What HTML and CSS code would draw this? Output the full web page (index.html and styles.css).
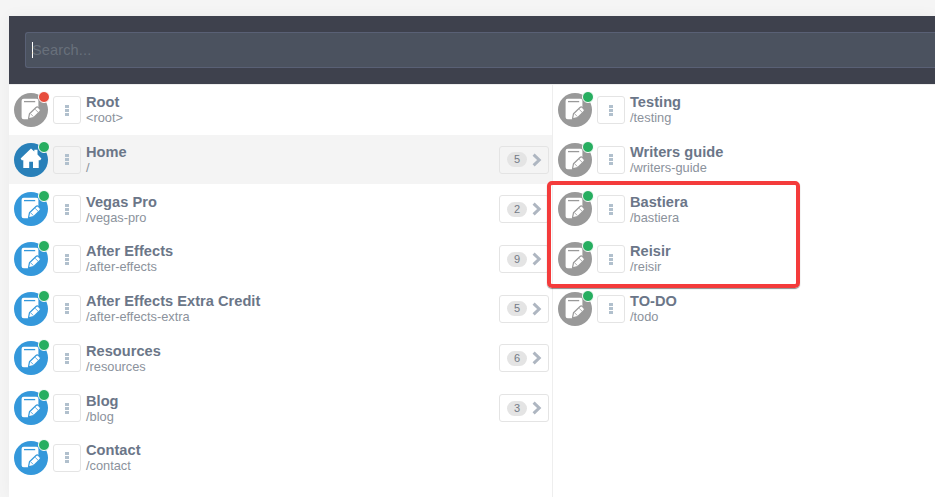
FILE: index.html
```
<!DOCTYPE html>
<html lang="en">
<head>
<meta charset="utf-8">
<title>Pages</title>
<link rel="stylesheet" href="styles.css">
</head>
<body>
<svg class="defs" aria-hidden="true">
  <symbol id="doc" viewBox="0 0 34 34">
    <path class="paper" d="M9.7 5.7H22.4Q24.4 5.7 24.4 7.7V16L15.6 22.5L14.2 26.2H9.7Q7.6 26.2 7.6 24.2V7.7Q7.6 5.7 9.7 5.7Z"/>
    <path class="line" d="M10 8.6H21.2"/>
    <path class="pencil" d="M14.5 25.8L15.5 20.7L22 14.5Q23.2 13.4 24.5 14.6L25.9 16Q27.1 17.3 25.9 18.5L19.6 24.7Z"/>
    <path class="detail" d="M16.7 20.9L19.4 23.6M21.2 16.4L24 19.2"/>
  </symbol>
  <symbol id="house" viewBox="0 0 34 34">
    <path class="paper" d="M17 5.4L20.3 8.6V6.8H23.5V11.6L27.4 15.4L26.2 17.2H24.7V24.9H19V18.7H15.2V24.9H9.3V17.2H7.8L6.6 15.4Z"/>
  </symbol>
  <symbol id="chevron" viewBox="0 0 10 14"><path d="M1.6 1.6L7.2 7L1.6 12.4"/></symbol>
</svg>
<main class="tree">
  <header class="bar"><div class="search"><span class="caret"></span>Search...</div></header>
  <div class="columns">
    <section class="column first" id="col1"></section>
    <section class="column" id="col2"></section>
    <div class="highlight"></div>
  </div>
</main>
<script src="script.js"></script>
</body>
</html>
```
FILE: styles.css
```
* { box-sizing: border-box; }
body { margin: 0; background: #f5f5f5; font-family: "Liberation Sans", Arial, sans-serif; overflow: hidden; }
.defs { display: none; }
.tree { margin: 16px 0 0 9px; height: 481px; background: #fff; box-shadow: 0 0 14px rgba(0,0,0,.045); }
.bar { height: 68px; padding: 16px 0 0 16px; background: #3e414d; }
.search { height: 36px; display: flex; align-items: center; padding-left: 6px; border: 1px solid #596075; border-right: 0; border-radius: 3px 0 0 3px; background: #4b525f; color: #68707b; font-size: 14.6px; letter-spacing: .1px; }
.caret { width: 1px; height: 16px; margin-right: -1px; background: #fff; }
.columns { position: relative; display: flex; height: 413px; border-top: 1px solid #eee; }
.column { flex: 1; padding-top: .2px; }
.first { flex: 0 0 544px; border-right: 1px solid #eee; }
.row { display: flex; align-items: center; height: 49.7px; padding: 0 3px 0 5px; }
.row.selected { height: 49px; margin-bottom: .7px; padding-top: .7px; background: #f4f4f4; }
.icon { position: relative; width: 34px; height: 34px; border-radius: 50%; background: #3498db; --disc: #3498db; }
.icon.gray { background: #999; --disc: #999; }
.icon.home { background: #2980b9; --disc: #2980b9; }
.icon svg { display: block; width: 34px; height: 34px; }
.paper { fill: #fff; }
.line { fill: none; stroke: var(--disc); stroke-width: 1.3; }
.pencil { fill: #fff; stroke: var(--disc); stroke-width: 1.2; stroke-linejoin: round; }
.detail { fill: none; stroke: var(--disc); stroke-width: .8; }
.status { position: absolute; right: -2px; top: -2px; width: 12px; height: 12px; border: 1px solid #fff; border-radius: 50%; background: #27ae60; }
.status.off { background: #e74c3c; }
.menu, .children { height: 28px; border: 1px solid #e4e4e4; border-radius: 3px; display: flex; align-items: center; }
.menu { width: 28px; margin-left: 5px; flex-direction: column; justify-content: center; gap: 1px; }
.menu i { width: 4px; height: 3px; background: #b1c0cd; }
.label { margin-left: 5px; padding-top: .8px; flex: 1; white-space: nowrap; }
.title { height: 16px; line-height: 16px; font-size: 14.6px; font-weight: bold; letter-spacing: .03px; color: #6b7688; }
.path { height: 16px; line-height: 16px; font-size: 12.8px; color: #8b929c; }
.children { width: 50px; padding-left: 7px; }
.count { width: 20px; height: 15px; border-radius: 8px; background: #e4e4e4; color: #737b87; font-size: 11px; line-height: 15px; text-align: center; }
.children svg { width: 10px; height: 14px; margin-left: 5px; fill: none; stroke: #aeb6c1; stroke-width: 3; }
.highlight { position: absolute; left: 538px; top: 96px; width: 253px; height: 107px; border: 4px solid #f43b3b; border-radius: 5px; box-shadow: 0 1px 1px rgba(0,0,0,.45); }
```
FILE: script.js
```
const first = [
  ["Root", "<root>", "gray", 0, "off"],
  ["Home", "/", "home", 5],
  ["Vegas Pro", "/vegas-pro", "", 2],
  ["After Effects", "/after-effects", "", 9],
  ["After Effects Extra Credit", "/after-effects-extra", "", 5],
  ["Resources", "/resources", "", 6],
  ["Blog", "/blog", "", 3],
  ["Contact", "/contact", "", 0]
];
const second = [
  ["Testing", "/testing", "gray", 0],
  ["Writers guide", "/writers-guide", "gray", 0],
  ["Bastiera", "/bastiera", "gray", 0],
  ["Reisir", "/reisir", "gray", 0],
  ["TO-DO", "/todo", "gray", 0]
];
const row = ([title, path, kind, count, status = ""]) => `
  <div class="row ${kind === "home" ? "selected" : ""}">
    <div class="icon ${kind}"><svg><use href="#${kind === "home" ? "house" : "doc"}"/></svg><span class="status ${status}"></span></div>
    <div class="menu"><i></i><i></i><i></i></div>
    <div class="label"><div class="title">${title}</div><div class="path">${path.replace("<", "&lt;")}</div></div>
    ${count ? `<div class="children"><span class="count">${count}</span><svg><use href="#chevron"/></svg></div>` : ""}
  </div>`;
document.getElementById("col1").innerHTML = first.map(row).join("");
document.getElementById("col2").innerHTML = second.map(row).join("");
```
